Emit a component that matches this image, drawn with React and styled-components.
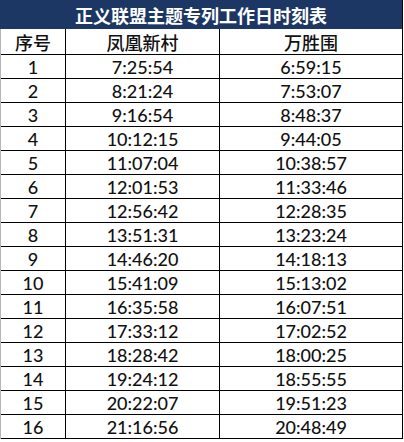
import React from "react";
import styled, { createGlobalStyle } from "styled-components";

const rows = [
    ["1", "7:25:54", "6:59:15"],
    ["2", "8:21:24", "7:53:07"],
    ["3", "9:16:54", "8:48:37"],
    ["4", "10:12:15", "9:44:05"],
    ["5", "11:07:04", "10:38:57"],
    ["6", "12:01:53", "11:33:46"],
    ["7", "12:56:42", "12:28:35"],
    ["8", "13:51:31", "13:23:24"],
    ["9", "14:46:20", "14:18:13"],
    ["10", "15:41:09", "15:13:02"],
    ["11", "16:35:58", "16:07:51"],
    ["12", "17:33:12", "17:02:52"],
    ["13", "18:28:42", "18:00:25"],
    ["14", "19:24:12", "18:55:55"],
    ["15", "20:22:07", "19:51:23"],
    ["16", "21:16:56", "20:48:49"],
];

const App = () => {
    return (
        <>
            <GlobalStyle />
            <Sheet>
                <Title>正义联盟主题专列工作日时刻表</Title>
                <Row header>
                    <Cell>序号</Cell>
                    <Cell>凤凰新村</Cell>
                    <Cell>万胜围</Cell>
                </Row>
                {rows.map(([no, a, b]) => (
                    <Row key={no}>
                        <Cell>{no}</Cell>
                        <Cell>{a}</Cell>
                        <Cell>{b}</Cell>
                    </Row>
                ))}
            </Sheet>
        </>
    );
};

export default App;

const GlobalStyle = createGlobalStyle`
    body {
        margin: 0;
        background: #fff;
        font-family: "Lato", "Noto Sans CJK SC", sans-serif;
    }
`;

const Sheet = styled.div`
    width: 403px;
    display: flex;
    flex-direction: column;
    border-left: 1px solid #b5b5b5;
    border-right: 1px solid #000;
    box-sizing: border-box;
`;

const Title = styled.div`
    height: 29px;
    display: flex;
    align-items: center;
    justify-content: center;
    background: #1c3763;
    color: #fff;
    font-family: "Noto Sans CJK SC", sans-serif;
    font-weight: 700;
    font-size: 18px;
    margin-left: -1px;
`;

const Row = styled.div`
    display: grid;
    grid-template-columns: 65px 154px 1fr;
    height: ${(props) => (props.header ? "26px" : "24px")};
    border-bottom: 1px solid #000;
    box-sizing: border-box;
    font-size: 18px;
    font-weight: 500;
    font-family: ${(props) =>
        props.header
            ? `"Noto Sans CJK SC", sans-serif`
            : `"Lato", "Noto Sans CJK SC", sans-serif`};
    color: #111;
`;

const Cell = styled.div`
    display: flex;
    align-items: center;
    justify-content: center;
    border-right: 1px solid #000;
    &:last-child {
        border-right: none;
    }
`;
